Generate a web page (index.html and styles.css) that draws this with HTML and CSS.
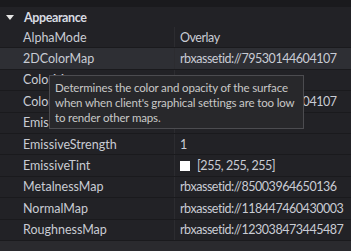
FILE: index.html
```html
<!DOCTYPE html>
<html>
<head>
<meta charset="utf-8">
<link rel="stylesheet" href="styles.css">
</head>
<body>
<div class="panel">
  <div class="topstrip"></div>
  <div class="section-header">
    <span class="caret"></span>
    <span class="section-title">Appearance</span>
  </div>
  <div class="rows">
    <div class="row"><div class="name">AlphaMode</div><div class="value">Overlay</div></div>
    <div class="row hover"><div class="name">2DColorMap</div><div class="value">rbxassetid://79530144604107</div></div>
    <div class="row"><div class="name">ColorMap</div><div class="value"></div></div>
    <div class="row"><div class="name">ColorMap</div><div class="value">rbxassetid://79530144604107</div></div>
    <div class="row"><div class="name">EmissiveMap</div><div class="value"></div></div>
    <div class="row"><div class="name">EmissiveStrength</div><div class="value">1</div></div>
    <div class="row"><div class="name">EmissiveTint</div><div class="value"><span class="swatch"></span>[255, 255, 255]</div></div>
    <div class="row"><div class="name">MetalnessMap</div><div class="value">rbxassetid://85003964650136</div></div>
    <div class="row"><div class="name">NormalMap</div><div class="value">rbxassetid://118447460430003</div></div>
    <div class="row"><div class="name">RoughnessMap</div><div class="value">rbxassetid://123038473445487</div></div>
  </div>
  <div class="section-header next">
    <span class="section-title plain">Data</span>
  </div>
  <div class="tooltip">Determines the color and opacity of the surface when when client's graphical settings are too low to render other maps.</div>
</div>
</body>
</html>
```
FILE: styles.css
```css
html, body {
  margin: 0;
  padding: 0;
  background: #1f1f22;
}
body {
  width: 351px;
  height: 251px;
  overflow: hidden;
  font-family: Lato, "Noto Sans", sans-serif;
  font-size: 12.5px;
  color: #c9ccd4;
}
.panel {
  position: relative;
  width: 351px;
  height: 251px;
  overflow: hidden;
}
.topstrip {
  height: 7px;
  background: #1a1a1d;
}
.section-header {
  height: 20px;
  display: flex;
  align-items: center;
  background: #222226;
}
.caret {
  width: 0;
  height: 0;
  margin-left: 6px;
  margin-right: 10px;
  border-left: 4px solid transparent;
  border-right: 4px solid transparent;
  border-top: 5px solid #e6e6e6;
}
.section-title {
  font-weight: bold;
  font-size: 12.5px;
  letter-spacing: -0.4px;
  color: #d8dbe2;
}
.section-title.plain {
  margin-left: 23px;
}
.next {
  background: #2a2a2e;
  align-items: flex-start;
  padding-top: 10px;
  height: 20px;
}
.row {
  display: grid;
  grid-template-columns: 175px 1fr;
  height: 21.4px;
  box-sizing: border-box;
  border-bottom: 1px solid #1a1a1d;
  background: #222226;
}
.row.hover {
  background: #2e2f34;
}
.name {
  padding-left: 23px;
  display: flex;
  align-items: center;
  border-right: 1px solid #2c2c30;
}
.value {
  padding-left: 5px;
  display: flex;
  align-items: center;
  letter-spacing: -0.45px;
  white-space: nowrap;
}
.swatch {
  width: 10px;
  height: 10px;
  background: #ffffff;
  margin-right: 7px;
}
.tooltip {
  position: absolute;
  left: 49px;
  top: 75px;
  width: 243px;
  height: 44px;
  padding: 4px 5px;
  background: #28282b;
  border: 1px solid #4c4c50;
  color: #c8c8c8;
  font-size: 11.5px;
  letter-spacing: -0.15px;
  line-height: 15px;
}
```
